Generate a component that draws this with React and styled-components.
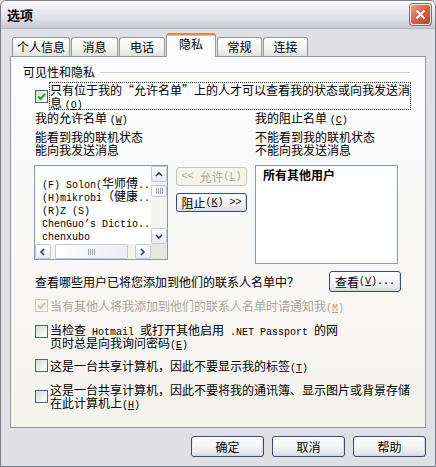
import React from "react";
import styled, { createGlobalStyle } from "styled-components";

const GlobalStyle = createGlobalStyle`
  html, body {
    margin: 0;
    padding: 0;
    background: #e0dfe3;
  }
  body {
    font-family: "Noto Sans CJK SC", "Liberation Sans", sans-serif;
    font-size: 12px;
    color: #000;
  }
`;

const Window = styled.div`
  box-sizing: border-box;
  width: 436px;
  height: 467px;
  border: 1px solid #7d7d86;
  border-radius: 6px 6px 0 0;
  background: #e0dfe3;
  display: flex;
  flex-direction: column;
  overflow: hidden;
`;

const TitleBar = styled.div`
  height: 27px;
  flex-shrink: 0;
  display: flex;
  align-items: center;
  justify-content: space-between;
  padding: 0 4px 0 6px;
  background: linear-gradient(to bottom, #fdfdfe 0%, #eeeef3 30%, #dcdce4 70%, #c8c8d3 100%);
  border-bottom: 1px solid #b4b4be;
`;

const Title = styled.div`
  font-size: 13px;
  font-weight: bold;
  line-height: 1;
`;

const CloseBtn = styled.div`
  box-sizing: border-box;
  width: 21px;
  height: 21px;
  border: 1px solid #f4e6e3;
  border-radius: 3px;
  box-shadow: 0 0 0 1px #a0625a;
  background: linear-gradient(135deg, #eba18b 0%, #d8664a 45%, #c0432b 100%);
  display: flex;
  align-items: center;
  justify-content: center;
`;

const Body = styled.div`
  flex: 1;
  display: flex;
  flex-direction: column;
  padding: 4px 9px 9px 9px;
`;

const Tabs = styled.div`
  display: flex;
  align-items: flex-end;
  gap: 1px;
  height: 23px;
  padding-left: 2px;
  position: relative;
  z-index: 1;
`;

const Tab = styled.div`
  box-sizing: border-box;
  width: ${(p) => p.$w}px;
  height: ${(p) => (p.$active ? 24 : 19)}px;
  margin-bottom: ${(p) => (p.$active ? -1 : 0)}px;
  border: 1px solid #919b9c;
  border-bottom: none;
  border-top: ${(p) => (p.$active ? "2px solid #e68b2c" : "1px solid #919b9c")};
  border-radius: 3px 3px 0 0;
  background: ${(p) =>
    p.$active ? "#fcfcfe" : "linear-gradient(to bottom, #ffffff, #f3f3ef 60%, #e2e1da)"};
  box-shadow: ${(p) => (p.$active ? "inset 0 1px 0 #ffc73c" : "none")};
  display: flex;
  align-items: center;
  justify-content: center;
  padding-bottom: ${(p) => (p.$active ? 4 : 0)}px;
  line-height: 1;
`;

const Page = styled.div`
  flex: 1;
  border: 1px solid #919b9c;
  background: linear-gradient(to bottom, #fcfcfe, #f4f3ee);
  padding: 8px 15px 0 12px;
  display: flex;
  flex-direction: column;
`;

const GroupHead = styled.div`
  display: flex;
  align-items: center;
  height: 14px;
  line-height: 14px;
  &::after {
    content: "";
    flex: 1;
    margin-left: 5px;
    border-top: 1px solid #d0d0bf;
  }
`;

const Content = styled.div`
  margin-left: 12px;
  display: flex;
  flex-direction: column;
`;

const CheckRow = styled.div`
  display: flex;
  align-items: ${(p) => (p.$top ? "flex-start" : "center")};
  gap: 2px;
  margin-top: ${(p) => p.$mt}px;
  white-space: nowrap;
`;

const Box = styled.span`
  box-sizing: border-box;
  flex-shrink: 0;
  width: 13px;
  height: 13px;
  margin-top: ${(p) => (p.$top ? 2 : 0)}px;
  border: 1px solid ${(p) => (p.$disabled ? "#cac8bb" : "#4a6684")};
  background: ${(p) =>
    p.$disabled ? "#f5f4ea" : "linear-gradient(135deg, #d8d8d2, #f6f6f4 70%, #ffffff)"};
  display: flex;
  align-items: center;
  justify-content: center;
`;

const Label = styled.span`
  line-height: 13px;
  color: ${(p) => (p.$disabled ? "#aca899" : "#000")};
  border: ${(p) => (p.$focus ? "1px dotted #333" : "none")};
  margin-left: ${(p) => (p.$focus ? -1 : 0)}px;
  flex: ${(p) => (p.$focus ? 1 : "none")};
`;

const Hot = styled.span`
  font-family: "Liberation Mono", monospace;
  font-size: 10px;
  line-height: 0;
`;

const Mono = styled.span`
  font-family: "Liberation Mono", monospace;
  font-size: 10px;
  line-height: 0;
`;

const ListsGrid = styled.div`
  display: grid;
  grid-template-columns: 133px 71px 143px;
  column-gap: 8px;
  align-items: start;
  margin-top: 1px;
`;

const ColTitle = styled.div`
  grid-column: ${(p) => p.$col};
  line-height: 14px;
`;

const ColDesc = styled.div`
  grid-column: ${(p) => p.$col};
  line-height: 13px;
  margin-top: 5px;
`;

const ListBox = styled.div`
  box-sizing: border-box;
  margin-top: 9px;
  height: ${(p) => p.$h}px;
  margin-left: ${(p) => (p.$left ? -1 : 0)}px;
  width: ${(p) => (p.$left ? 134 : 143)}px;
  border: 1px solid #7f9db9;
  background: #fff;
  display: grid;
  grid-template-columns: ${(p) => (p.$scroll ? "1fr 16px" : "1fr")};
  grid-template-rows: ${(p) => (p.$scroll ? "1fr 15px" : "1fr")};
  overflow: hidden;
`;

const Items = styled.div`
  padding: 13px 0 0 7px;
  overflow: hidden;
`;

const Item = styled.div`
  height: 13px;
  font-family: "Liberation Mono", monospace;
  font-size: 10px;
  line-height: 13px;
  white-space: nowrap;
`;

const Cjk = styled.span`
  font-family: "Noto Sans CJK SC", sans-serif;
  font-size: 12px;
  line-height: 0;
`;

const VScroll = styled.div`
  display: flex;
  flex-direction: column;
  background: #f4f4f0;
`;

const HScroll = styled.div`
  display: flex;
  align-items: stretch;
  background: #f4f4f0;
`;

const ScrollBtn = styled.div`
  box-sizing: border-box;
  width: 16px;
  height: ${(p) => (p.$horiz ? 15 : 16)}px;
  border: 1px solid #c3c9d6;
  border-radius: 2px;
  background: linear-gradient(to bottom, #ffffff, #e9ebf2);
  display: flex;
  align-items: center;
  justify-content: center;
`;

const Thumb = styled.div`
  box-sizing: border-box;
  border: 1px solid #c3c9d6;
  border-radius: 2px;
  background: linear-gradient(to right, #ffffff, #eceef4);
  display: flex;
  align-items: center;
  justify-content: center;
  ${(p) =>
    p.$horiz
      ? `width: 73px; margin-left: 4px;`
      : `height: 12px; margin-top: 3px;`}
`;

const Grip = styled.span`
  width: 7px;
  height: 6px;
  background: repeating-linear-gradient(to right, #9aa3b7 0 1px, transparent 1px 2px);
`;

const Spacer = styled.div`
  flex: 1;
`;

const Corner = styled.div`
  background: #e8e7e2;
`;

const Bold = styled.div`
  font-weight: bold;
  line-height: 13px;
  padding: 2px 7px;
`;

const MidCol = styled.div`
  grid-column: 2;
  grid-row: 3;
  margin-top: 11px;
  display: flex;
  flex-direction: column;
  gap: 7px;
`;

const Button = styled.button`
  box-sizing: border-box;
  width: ${(p) => p.$w || 73}px;
  height: ${(p) => p.$h || 21}px;
  padding: 0;
  font-family: "Noto Sans CJK SC", sans-serif;
  font-size: 12px;
  line-height: 1;
  color: #000;
  border: 1px solid #3b4d6d;
  border-radius: 3px;
  background: linear-gradient(to bottom, #ffffff 0%, #f6f6f8 45%, #e6e6ec 85%, #d2d3dc 100%);
  box-shadow: inset 1px 0 0 #eef0f6, inset -1px 0 0 #d6dae6;
  display: flex;
  align-items: center;
  justify-content: center;
  white-space: nowrap;
  &:disabled {
    color: #aca899;
    border-color: #c9c7ba;
    background: #f5f4ea;
    box-shadow: none;
  }
`;

const ViewRow = styled.div`
  display: flex;
  align-items: center;
  justify-content: space-between;
  margin-top: 7px;
  margin-right: 9px;
`;

const Footer = styled.div`
  display: flex;
  justify-content: flex-end;
  gap: 8px;
  margin-top: 8px;
`;

const hk = (k) => (
  <Hot>
    (<u>{k}</u>)
  </Hot>
);

const Check = ({ disabled }) => (
  <svg width="9" height="9" viewBox="0 0 9 9">
    <polyline
      points="1,4.5 3.5,7 8,2"
      fill="none"
      stroke={disabled ? "#c7c5b2" : "#21a121"}
      strokeWidth="2"
    />
  </svg>
);

const Arrow = ({ dir }) => {
  const pts = {
    up: "2,6 5,3 8,6",
    down: "2,3 5,6 8,3",
    left: "6,2 3,5 6,8",
    right: "3,2 6,5 3,8",
  }[dir];
  return (
    <svg width="10" height="9" viewBox="0 0 10 9">
      <polyline points={pts} fill="none" stroke="#2d3d5c" strokeWidth="1.6" />
    </svg>
  );
};

const tabs = [
  { label: "个人信息", w: 58 },
  { label: "消息", w: 47 },
  { label: "电话", w: 46 },
  { label: "隐私", w: 50, active: true },
  { label: "常规", w: 45 },
  { label: "连接", w: 45 },
];

export default function App() {
  return (
    <>
      <GlobalStyle />
      <Window>
        <TitleBar>
          <Title>选项</Title>
          <CloseBtn>
            <svg width="11" height="11" viewBox="0 0 11 11">
              <path d="M1.5 1.5 L9.5 9.5 M9.5 1.5 L1.5 9.5" stroke="#fff" strokeWidth="2" />
            </svg>
          </CloseBtn>
        </TitleBar>
        <Body>
          <Tabs>
            {tabs.map((t) => (
              <Tab key={t.label} $w={t.w} $active={t.active}>
                {t.label}
              </Tab>
            ))}
          </Tabs>
          <Page>
            <GroupHead>可见性和隐私</GroupHead>
            <Content>
              <CheckRow $mt={3}>
                <Box>
                  <Check />
                </Box>
                <Label $focus>
                  只有位于我的“允许名单”上的人才可以查看我的状态或向我发送消
                  <br />息 {hk("O")}
                </Label>
              </CheckRow>

              <ListsGrid>
                <ColTitle $col="1 / 3">我的允许名单 {hk("W")}</ColTitle>
                <ColTitle $col="3">我的阻止名单 {hk("C")}</ColTitle>
                <ColDesc $col="1 / 3">
                  能看到我的联机状态
                  <br />
                  能向我发送消息
                </ColDesc>
                <ColDesc $col="3">
                  不能看到我的联机状态
                  <br />
                  不能向我发送消息
                </ColDesc>

                <ListBox $left $scroll $h={95}>
                  <Items>
                    <Item>
                      (F) Solon(<Cjk>华师傅</Cjk>..
                    </Item>
                    <Item>
                      (H)mikrobi<Cjk>（健康</Cjk>..
                    </Item>
                    <Item>(R)Z   (S)</Item>
                    <Item>ChenGuo’s Dictio..</Item>
                    <Item>chenxubo</Item>
                  </Items>
                  <VScroll>
                    <ScrollBtn>
                      <Arrow dir="up" />
                    </ScrollBtn>
                    <Thumb>
                      <Grip />
                    </Thumb>
                    <Spacer />
                    <ScrollBtn>
                      <Arrow dir="down" />
                    </ScrollBtn>
                  </VScroll>
                  <HScroll>
                    <ScrollBtn $horiz>
                      <Arrow dir="left" />
                    </ScrollBtn>
                    <Thumb $horiz>
                      <Grip />
                    </Thumb>
                    <Spacer />
                    <ScrollBtn $horiz>
                      <Arrow dir="right" />
                    </ScrollBtn>
                  </HScroll>
                  <Corner />
                </ListBox>

                <MidCol>
                  <Button $w={71} $h={19} disabled>
                    <Mono>&lt;&lt;&nbsp;</Mono>允许{hk("L")}
                  </Button>
                  <Button $w={71} $h={19}>
                    阻止{hk("K")}
                    <Mono>&nbsp;&gt;&gt;</Mono>
                  </Button>
                </MidCol>

                <ListBox $h={99}>
                  <Bold>所有其他用户</Bold>
                </ListBox>
              </ListsGrid>

              <ViewRow>
                <span>查看哪些用户已将您添加到他们的联系人名单中？</span>
                <Button $w={72}>
                  查看{hk("V")}
                  <Mono>...</Mono>
                </Button>
              </ViewRow>

              <CheckRow $mt={7}>
                <Box $disabled>
                  <Check disabled />
                </Box>
                <Label $disabled>当有其他人将我添加到他们的联系人名单时请通知我{hk("M")}</Label>
              </CheckRow>

              <CheckRow $mt={11} $top>
                <Box $top />
                <Label>
                  当检查<Mono> Hotmail </Mono>或打开其他启用<Mono> .NET Passport </Mono>的网
                  <br />
                  页时总是向我询问密码{hk("E")}
                </Label>
              </CheckRow>

              <CheckRow $mt={10}>
                <Box />
                <Label>这是一台共享计算机，因此不要显示我的标签{hk("T")}</Label>
              </CheckRow>

              <CheckRow $mt={11}>
                <Box />
                <Label>
                  这是一台共享计算机，因此不要将我的通讯簿、显示图片或背景存储
                  <br />
                  在此计算机上{hk("H")}
                </Label>
              </CheckRow>
            </Content>
          </Page>
          <Footer>
            <Button>确定</Button>
            <Button>取消</Button>
            <Button>帮助</Button>
          </Footer>
        </Body>
      </Window>
    </>
  );
}
